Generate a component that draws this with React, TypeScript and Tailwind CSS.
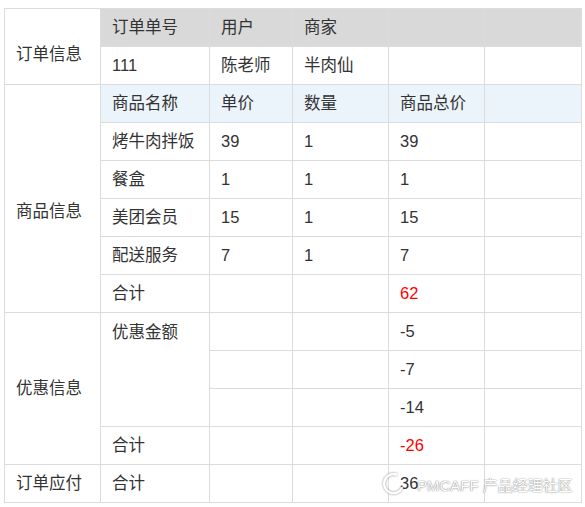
import React from 'react';

type Cell = {
  text?: string;
  rowSpan?: number;
  red?: boolean;
  top?: boolean;
  pad?: string;
};

const td = 'border border-[#dcdcdc] px-[11px] text-left align-middle font-normal';

const Row: React.FC<{ cells: Cell[]; bg?: string }> = ({ cells, bg = '' }) => (
  <tr className="h-[38px]">
    {cells.map((c, i) => (
      <td
        key={i}
        rowSpan={c.rowSpan}
        className={`${td} ${c.rowSpan && c.rowSpan > 1 ? 'bg-white' : bg} ${c.red ? 'text-[#ff0000]' : ''} ${
          c.top ? 'align-top pt-[7px]' : ''
        } ${c.pad ?? ''}`}
      >
        {c.text}
      </td>
    ))}
  </tr>
);

const Watermark: React.FC = () => (
  <div className="pointer-events-none absolute left-[381px] top-[472px] flex items-center whitespace-nowrap">
    <svg width="24" height="24" viewBox="0 0 24 24" className="drop-shadow-[0_0_1px_rgba(0,0,0,0.45)]">
      <path d="M15 2.5 A9.5 9.5 0 1 0 21 16" fill="none" stroke="#ffffff" strokeWidth="2.4" strokeLinecap="round" />
    </svg>
    <span className="ml-[12px] mt-[3px] text-[15px] leading-none text-white [text-shadow:0_0_1px_rgba(0,0,0,0.55),0_0_2px_rgba(0,0,0,0.25)]">
      PMCAFF 产品经理社区
    </span>
  </div>
);

export default function App() {
  return (
    <div className="relative w-[585px] h-[507px] bg-white pt-[8px] pl-[4px] font-['Liberation_Sans','Noto_Sans_CJK_SC',sans-serif] text-[16.5px] text-[#333333]">
      <table className="w-[577px] table-fixed border-collapse">
        <colgroup>
          <col className="w-[96px]" />
          <col className="w-[109px]" />
          <col className="w-[83px]" />
          <col className="w-[96px]" />
          <col className="w-[96px]" />
          <col className="w-[97px]" />
        </colgroup>
        <tbody>
          <Row
            bg="bg-[#d9d9d9]"
            cells={[{ text: '订单信息', rowSpan: 2, pad: 'pt-[15px]' }, { text: '订单单号' }, { text: '用户' }, { text: '商家' }, {}, {}]}
          />
          <Row cells={[{ text: '111' }, { text: '陈老师' }, { text: '半肉仙' }, {}, {}]} />
          <Row
            bg="bg-[#ebf3fb]"
            cells={[{ text: '商品信息', rowSpan: 6, pad: 'pt-[26px]' }, { text: '商品名称' }, { text: '单价' }, { text: '数量' }, { text: '商品总价' }, {}]}
          />
          <Row cells={[{ text: '烤牛肉拌饭' }, { text: '39' }, { text: '1' }, { text: '39' }, {}]} />
          <Row cells={[{ text: '餐盒' }, { text: '1' }, { text: '1' }, { text: '1' }, {}]} />
          <Row cells={[{ text: '美团会员' }, { text: '15' }, { text: '1' }, { text: '15' }, {}]} />
          <Row cells={[{ text: '配送服务' }, { text: '7' }, { text: '1' }, { text: '7' }, {}]} />
          <Row cells={[{ text: '合计' }, {}, {}, { text: '62', red: true }, {}]} />
          <Row
            cells={[{ text: '优惠信息', rowSpan: 4 }, { text: '优惠金额', rowSpan: 3, top: true }, {}, {}, { text: '-5' }, {}]}
          />
          <Row cells={[{}, {}, { text: '-7' }, {}]} />
          <Row cells={[{}, {}, { text: '-14' }, {}]} />
          <Row cells={[{ text: '合计' }, {}, {}, { text: '-26', red: true }, {}]} />
          <Row cells={[{ text: '订单应付' }, { text: '合计' }, {}, {}, { text: '36' }, {}]} />
        </tbody>
      </table>
      <Watermark />
    </div>
  );
}
